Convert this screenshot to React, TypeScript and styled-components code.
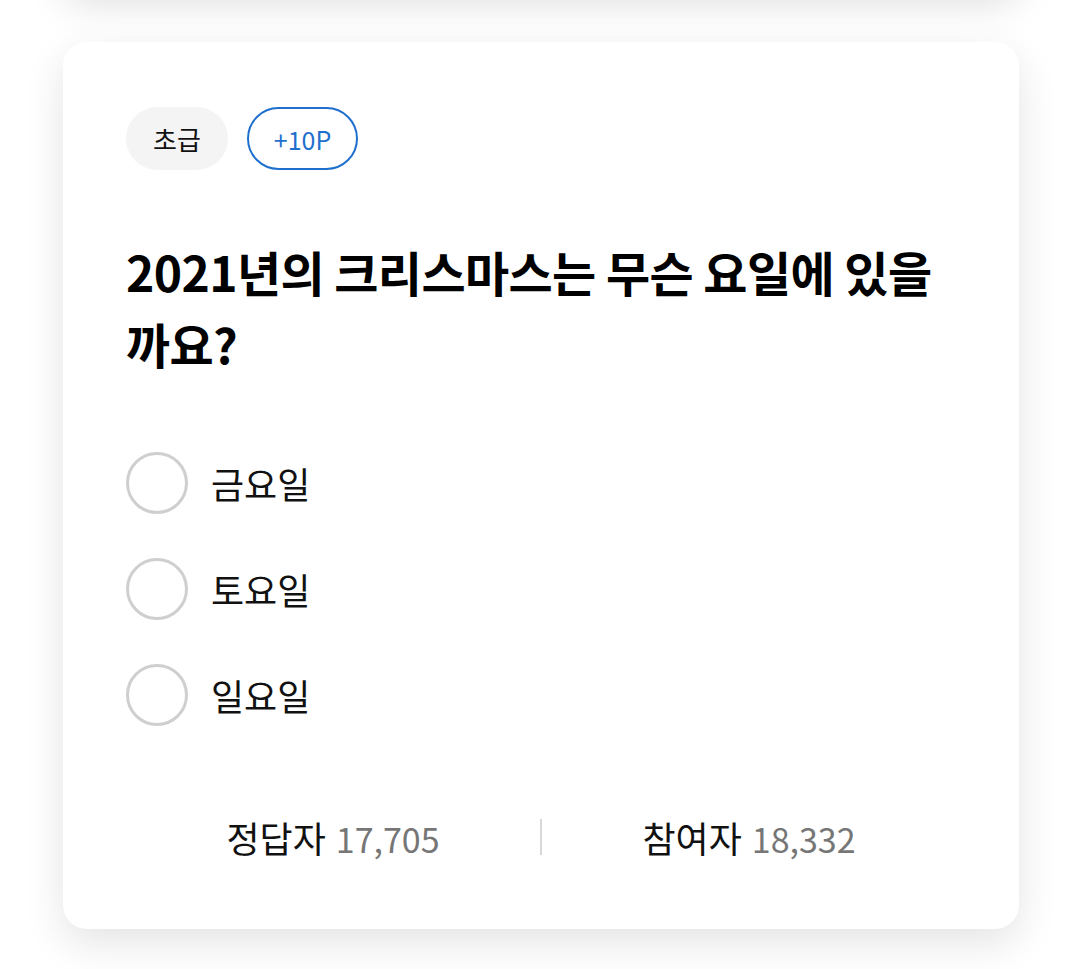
import React from "react";
import styled, { createGlobalStyle } from "styled-components";

const Global = createGlobalStyle`
  html, body { margin: 0; padding: 0; background: #ffffff; }
  body { font-family: "Noto Sans CJK KR", "Noto Sans", sans-serif; color: #111; }
`;

const Page = styled.div`
  position: relative;
  width: 1080px;
  height: 969px;
  overflow: hidden;
  background: #ffffff;
  padding: 42px 61px 0 63px;
  box-sizing: border-box;
`;

const PrevCard = styled.div`
  position: absolute;
  left: 63px;
  right: 61px;
  top: -200px;
  height: 188px;
  border-radius: 24px;
  background: #fff;
  box-shadow: 0 14px 40px rgba(0, 0, 0, 0.14);
`;

const Card = styled.div`
  position: relative;
  background: #fff;
  border-radius: 24px;
  box-shadow: 0 14px 40px rgba(0, 0, 0, 0.11);
  padding: 65px 63px 0 63px;
  height: 887px;
  box-sizing: border-box;
  display: flex;
  flex-direction: column;
`;

const Badges = styled.div`
  display: flex;
  gap: 19px;
`;

const Badge = styled.span<{ $outline?: boolean }>`
  display: inline-flex;
  align-items: center;
  justify-content: center;
  height: 63px;
  box-sizing: border-box;
  border-radius: 32px;
  font-size: ${(p) => (p.$outline ? "25px" : "26px")};
  background: ${(p) => (p.$outline ? "#fff" : "#f4f4f4")};
  border: ${(p) => (p.$outline ? "2px solid #1f6fce" : "none")};
  color: ${(p) => (p.$outline ? "#1f6fce" : "#111")};
  width: ${(p) => (p.$outline ? "111px" : "102px")};
`;

const Title = styled.h2`
  margin: 65px 0 0 0;
  font-size: 48px;
  line-height: 72px;
  font-weight: 700;
  letter-spacing: -0.6px;
  color: #000;
`;

const Options = styled.div`
  margin-top: 73px;
  display: flex;
  flex-direction: column;
  gap: 44px;
`;

const Option = styled.label`
  display: flex;
  align-items: center;
  gap: 23px;
  font-size: 36px;
  color: #111;
  cursor: pointer;
`;

const Radio = styled.span`
  width: 62px;
  height: 62px;
  border-radius: 50%;
  border: 3px solid #cfcfcf;
  box-sizing: border-box;
  flex: none;
`;

const Stats = styled.div`
  margin-top: 85px;
  display: flex;
  align-items: center;
`;

const Stat = styled.div`
  flex: 1;
  text-align: center;
  font-size: 36px;
  color: #111;
`;

const Num = styled.span`
  color: #767676;
  margin-left: 10px;
  font-size: 34px;
`;

const Divider = styled.span`
  width: 2px;
  height: 36px;
  background: #d8d8d8;
  flex: none;
`;

const options = ["금요일", "토요일", "일요일"];

export default function App() {
  return (
    <>
      <Global />
      <Page>
        <PrevCard />
        <Card>
          <Badges>
            <Badge>초급</Badge>
            <Badge $outline>+10P</Badge>
          </Badges>
          <Title>2021년의 크리스마스는 무슨 요일에 있을까요?</Title>
          <Options>
            {options.map((o) => (
              <Option key={o}>
                <Radio />
                {o}
              </Option>
            ))}
          </Options>
          <Stats>
            <Stat>
              정답자<Num>17,705</Num>
            </Stat>
            <Divider />
            <Stat>
              참여자<Num>18,332</Num>
            </Stat>
          </Stats>
        </Card>
      </Page>
    </>
  );
}
